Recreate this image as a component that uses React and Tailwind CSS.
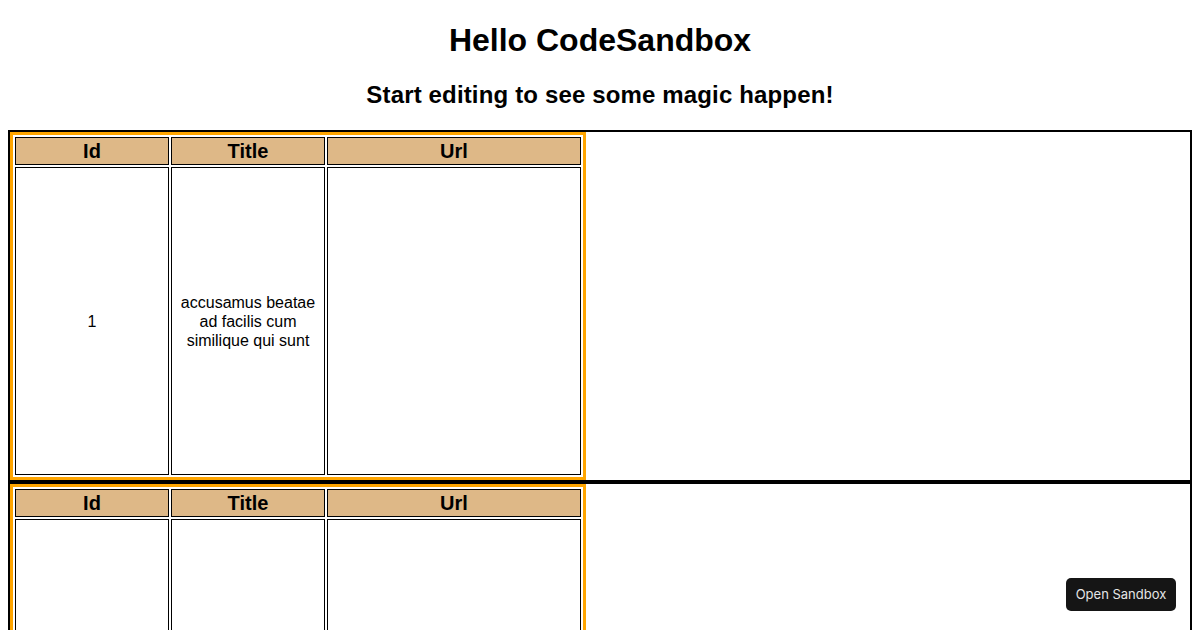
import React from "react";

const fotos = [
  { id: 1, title: "accusamus beatae ad facilis cum similique qui sunt" },
  { id: 2, title: "reprehenderit est deserunt velit ipsam" },
];

function FotoRow({ foto }) {
  return (
    <div className="border-2 border-black flex">
      <table className="border-separate border-spacing-[2px] border-[3px] border-[#ffa500]">
        <thead>
          <tr>
            <th className="w-[154px] h-[28px] p-px border border-black bg-[#deb887] text-[20px] font-bold leading-[23px]">Id</th>
            <th className="w-[154px] h-[28px] p-px border border-black bg-[#deb887] text-[20px] font-bold leading-[23px]">Title</th>
            <th className="w-[254px] h-[28px] p-px border border-black bg-[#deb887] text-[20px] font-bold leading-[23px]">Url</th>
          </tr>
        </thead>
        <tbody>
          <tr>
            <td className="h-[308px] p-px border border-black text-center align-middle text-base leading-[19px]">{foto.id}</td>
            <td className="h-[308px] p-px border border-black text-center align-middle text-base leading-[19px]">{foto.title}</td>
            <td className="h-[308px] p-px border border-black"></td>
          </tr>
        </tbody>
      </table>
    </div>
  );
}

export default function App() {
  return (
    <div className="h-screen overflow-hidden bg-white text-black font-['Liberation_Sans',Arial,sans-serif]">
      <div className="px-2">
        <h1 className="pt-[22px] text-center text-[32px] font-bold leading-[37px]">Hello CodeSandbox</h1>
        <h2 className="mt-[22px] text-center text-2xl font-bold leading-[28px] tracking-[0.15px]">Start editing to see some magic happen!</h2>
        <div className="mt-[21px]">
          {fotos.map((foto) => (
            <FotoRow key={foto.id} foto={foto} />
          ))}
        </div>
      </div>

      <button className="fixed right-6 bottom-[19px] h-[33px] w-[110px] rounded-[5px] bg-[#151515] text-[#e5e5e5] text-[13px] font-['Inter',sans-serif]">
        Open Sandbox
      </button>
    </div>
  );
}
